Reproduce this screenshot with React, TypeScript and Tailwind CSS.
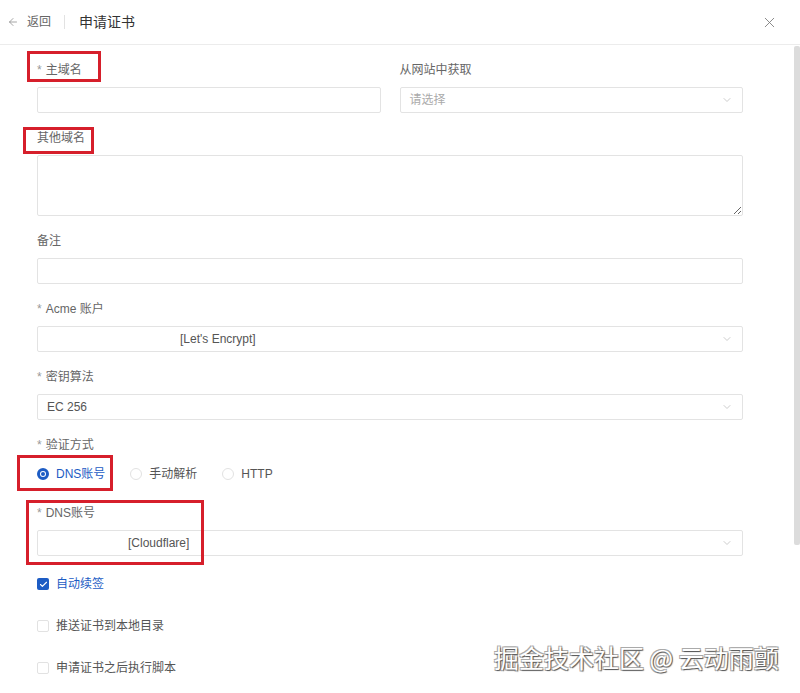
import React from "react";
import { ArrowLeft, X, ChevronDown, Check } from "lucide-react";

const font = "font-['Liberation_Sans','Noto_Sans_CJK_SC',sans-serif]";

function Label(props: { text: string; required?: boolean }) {
  return (
    <div className="h-5 leading-5 text-[12px] text-[#666] mb-[7px]">
      {props.required && <span className="text-[#999] mr-1">*</span>}
      {props.text}
    </div>
  );
}

function Select(props: { value?: string; placeholder?: string; indent?: string }) {
  return (
    <div className="h-[26px] border border-[#e3e3e3] rounded-[2px] flex items-center pr-[9px] bg-white">
      <div className={`flex-1 text-[12px] ${props.indent ?? "pl-[9px]"} ${props.value ? "text-[#555]" : "text-[#aaa]"}`}>
        {props.value ?? props.placeholder}
      </div>
      <ChevronDown size={12} strokeWidth={1.5} className="text-[#bbb]" />
    </div>
  );
}

function Radio(props: { label: string; checked?: boolean }) {
  return (
    <div className="flex items-center gap-[7px]">
      {props.checked ? (
        <div className="w-3 h-3 rounded-full border-[3px] border-[#1d5cc4] flex items-center justify-center bg-white">
          <div className="w-[4px] h-[4px] rounded-full bg-[#1d5cc4]" />
        </div>
      ) : (
        <div className="w-3 h-3 rounded-full border border-[#e2e2e2]" />
      )}
      <span className={`text-[12px] ${props.checked ? "text-[#1d5cc4]" : "text-[#555]"}`}>{props.label}</span>
    </div>
  );
}

function CheckItem(props: { label: string; checked?: boolean }) {
  return (
    <div className="h-5 flex items-center gap-[7px]">
      {props.checked ? (
        <div className="w-3 h-3 rounded-[2px] bg-[#1d5cc4] flex items-center justify-center">
          <Check size={9} strokeWidth={3} className="text-white" />
        </div>
      ) : (
        <div className="w-3 h-3 rounded-[2px] border border-[#e2e2e2]" />
      )}
      <span className={`text-[12px] ${props.checked ? "text-[#1d5cc4]" : "text-[#555]"}`}>{props.label}</span>
    </div>
  );
}

export default function App() {
  return (
    <div className={`relative w-[800px] h-[693px] bg-white overflow-hidden ${font}`}>
      <header className="h-[45px] border-b border-[#ececec] flex items-center pl-[7px] pr-[22px]">
        <ArrowLeft size={12} strokeWidth={1.5} className="text-[#888]" />
        <span className="ml-[8px] text-[12px] text-[#666]">返回</span>
        <div className="ml-[13px] w-px h-[14px] bg-[#e2e2e2]" />
        <span className="ml-[14px] text-[14px] text-[#333]">申请证书</span>
        <div className="flex-1" />
        <X size={17} strokeWidth={1.2} className="text-[#777]" />
      </header>

      <div className="flex">
        <main className="flex-1 pl-[37px] pr-[51px] pt-[15px]">
          <div className="flex gap-[19px] mb-[15px]">
            <div className="flex-1">
              <Label text="主域名" required />
              <div className="h-[26px] border border-[#e3e3e3] rounded-[2px]" />
            </div>
            <div className="flex-1">
              <Label text="从网站中获取" />
              <Select placeholder="请选择" />
            </div>
          </div>

          <div className="mb-[15px]">
            <Label text="其他域名" />
            <textarea readOnly className="block w-full h-[61px] border border-[#e3e3e3] rounded-[2px] outline-none" />
          </div>

          <div className="mb-[15px]">
            <Label text="备注" />
            <div className="h-[26px] border border-[#e3e3e3] rounded-[2px]" />
          </div>

          <div className="mb-[15px]">
            <Label text="Acme 账户" required />
            <Select value="[Let's Encrypt]" indent="pl-[142px]" />
          </div>

          <div className="mb-[15px]">
            <Label text="密钥算法" required />
            <Select value="EC 256" />
          </div>

          <div className="h-5 leading-5 text-[12px] text-[#666]">
            <span className="text-[#999] mr-1">*</span>验证方式
          </div>
          <div className="h-5 mt-[9px] flex items-center gap-[25px]">
            <Radio label="DNS账号" checked />
            <Radio label="手动解析" />
            <Radio label="HTTP" />
          </div>

          <div className="mt-[19px]">
            <Label text="DNS账号" required />
            <Select value="[Cloudflare]" indent="pl-[90px]" />
          </div>

          <div className="mt-[18px] flex flex-col gap-[22px]">
            <CheckItem label="自动续签" checked />
            <CheckItem label="推送证书到本地目录" />
            <CheckItem label="申请证书之后执行脚本" />
          </div>
        </main>
        <div className="w-[6px] pt-px">
          <div className="h-[499px] bg-[#dcdcdc] rounded-[2px]" />
        </div>
      </div>

      {/* annotation frames */}
      <div className="absolute left-[27px] top-[51px] w-[74px] h-[31px] border-[3px] border-[#d61f2b]" />
      <div className="absolute left-[23px] top-[127px] w-[71px] h-[27px] border-[3px] border-[#d61f2b]" />
      <div className="absolute left-[17px] top-[455px] w-[96px] h-[36px] border-[3px] border-[#d61f2b]" />
      <div className="absolute left-[26px] top-[500px] w-[178px] h-[65px] border-[3px] border-[#d61f2b]" />

      <div className="absolute left-[494px] top-[642px] text-[25px] leading-[30px] text-white font-['Noto_Sans_CJK_SC',sans-serif] [text-shadow:1px_1px_1px_#555,-1px_-1px_0_#aaa,1px_-1px_0_#aaa,-1px_1px_0_#aaa]">
        掘金技术社区 @ 云动雨颤
      </div>
    </div>
  );
}
